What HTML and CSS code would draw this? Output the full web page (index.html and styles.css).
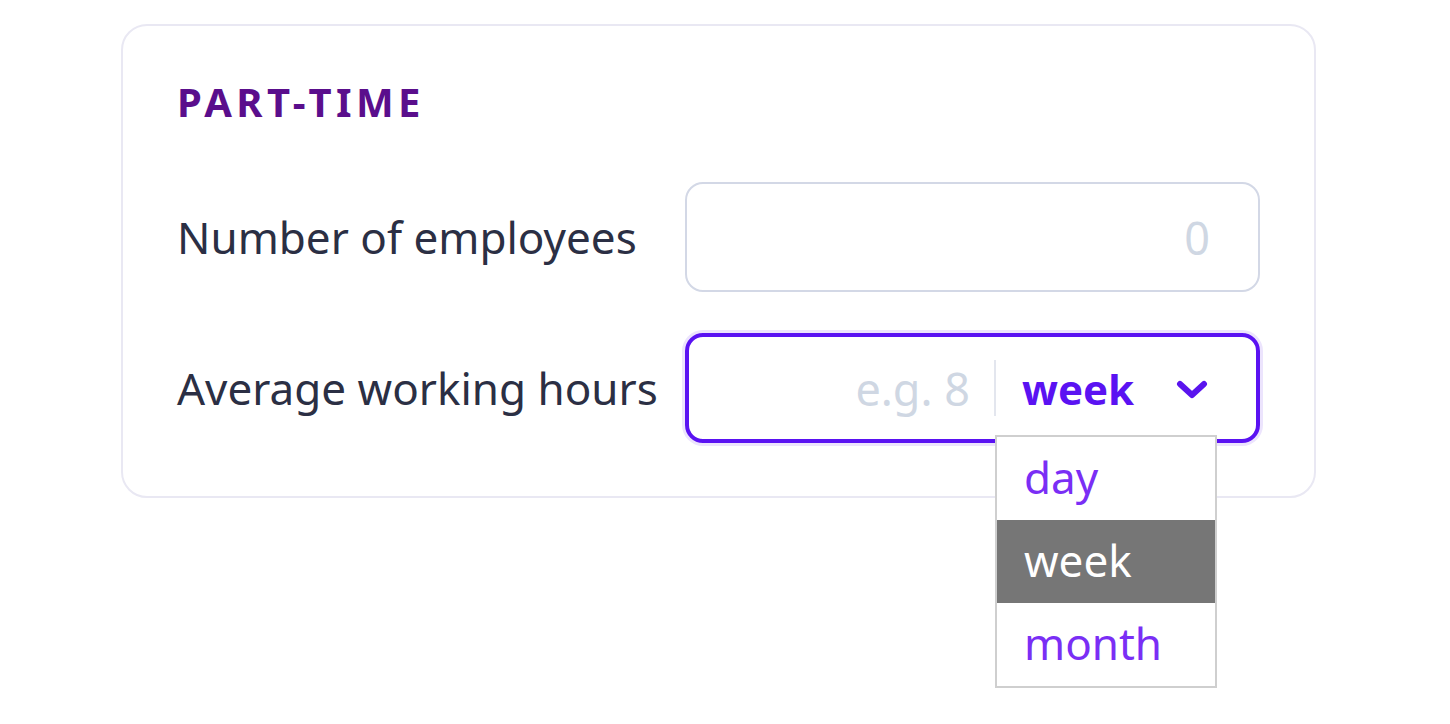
FILE: index.html
```html
<!DOCTYPE html>
<html lang="en">
<head>
<meta charset="utf-8">
<title>Part-time</title>
<link rel="stylesheet" href="styles.css">
</head>
<body>
<main class="page">
<section class="card">
  <h2 class="title">PART-TIME</h2>
  <div class="rows">
    <label class="label">Number of employees</label>
    <div class="field">
      <span class="placeholder">0</span>
    </div>
    <label class="label">Average working hours</label>
    <div class="field field-focus">
      <span class="placeholder grow">e.g. 8</span>
      <div class="select">
        <span class="select-value">week</span>
        <svg class="chev" width="32" height="20" viewBox="0 0 32 20"><path d="M4 4 L16 15 L28 4" fill="none" stroke="#5a14ee" stroke-width="6" stroke-linecap="round" stroke-linejoin="round"/></svg>
        <ul class="menu">
          <li class="opt">day</li>
          <li class="opt opt-active">week</li>
          <li class="opt">month</li>
        </ul>
      </div>
    </div>
  </div>
</section>
</main>
</body>
</html>
```
FILE: styles.css
```css
* { box-sizing: border-box; }
html, body { margin: 0; padding: 0; background: #ffffff; }
body { font-family: "Noto Sans", "Open Sans", sans-serif; }

.page {
  min-height: 724px;
  padding: 24px 0 0 121px;
}

.card {
  width: 1195px;
  height: 474px;
  border: 2px solid #e9e8f3;
  border-radius: 26px;
  padding: 52px 54px 0 54px;
}

.title {
  margin: 0;
  font-size: 40px;
  line-height: 48px;
  font-weight: 700;
  letter-spacing: 4.4px;
  color: #5a0e8c;
}

.rows {
  margin-top: 56px;
  display: grid;
  grid-template-columns: 1fr 575px;
  row-gap: 41px;
  align-items: center;
}

.label {
  font-size: 44px;
  color: #2b2f44;
  white-space: nowrap;
}

.field {
  height: 110px;
  border: 2px solid #d3d8e6;
  border-radius: 18px;
  display: flex;
  align-items: center;
  justify-content: flex-end;
  padding: 0 48px 0 20px;
}

.placeholder {
  font-size: 45px;
  color: #cfd7e3;
}

.field-focus {
  border: 4px solid #5a12f2;
  box-shadow: 0 0 0 3px #ece4fd;
  padding: 0 48px 0 20px;
  position: relative;
}

.grow {
  flex: 1;
  text-align: right;
  padding-right: 24px;
}

.select {
  position: relative;
  display: flex;
  align-items: center;
  height: 56px;
  border-left: 2px solid #e3e6ee;
  padding-left: 26px;
  width: 214px;
  justify-content: space-between;
}

.select-value {
  font-size: 42px;
  font-weight: 700;
  color: #5a12f2;
}

.chev { display: block; margin-top: 4px; }

.menu {
  position: absolute;
  left: -1px;
  top: 75px;
  width: 222px;
  margin: 0;
  padding: 0;
  list-style: none;
  background: #ffffff;
  border: 2px solid #cfcfcf;
  z-index: 2;
}

.opt {
  height: 83px;
  line-height: 80px;
  padding-left: 27px;
  font-size: 44px;
  color: #7a2ef5;
}

.opt-active {
  background: #767676;
  color: #ffffff;
}
```
